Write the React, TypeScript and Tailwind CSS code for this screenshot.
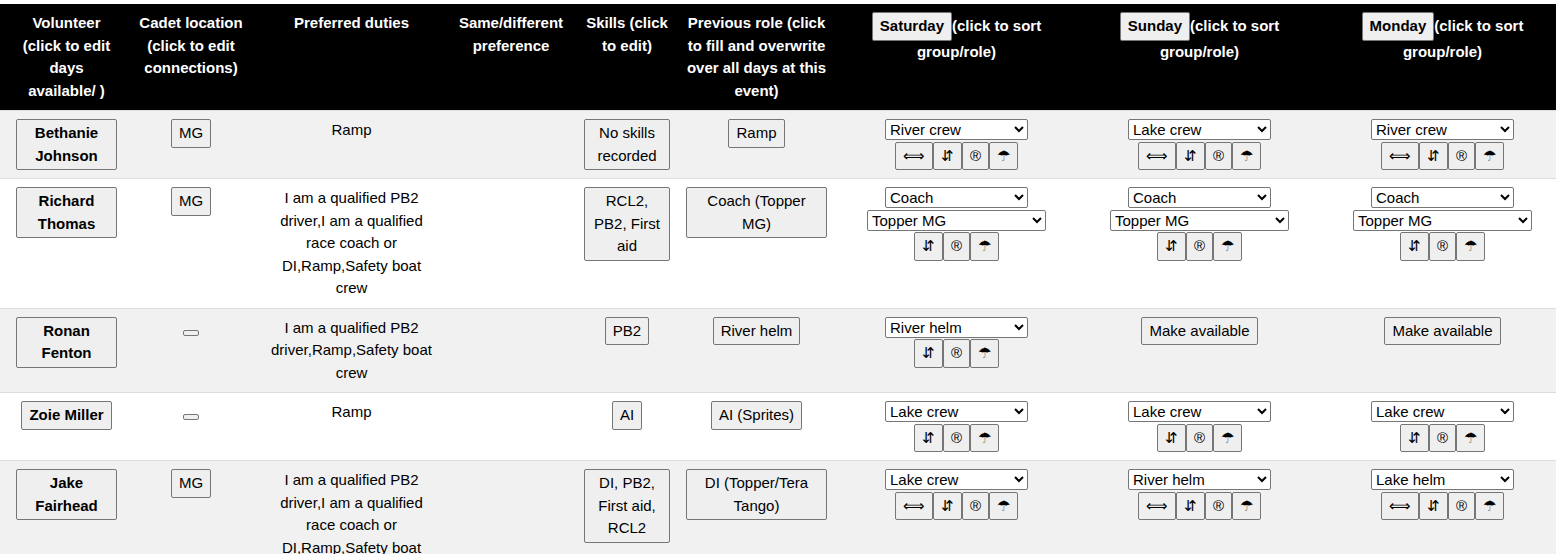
import type { ReactNode } from 'react';

type Day = {
  role?: string;
  group?: string;
  copyable?: boolean;
};

type Volunteer = {
  name: string;
  location: string;
  duties: string;
  preference: string;
  skills: string;
  previousRole: string;
  days: Day[];
};

const DAY_NAMES = ['Saturday', 'Sunday', 'Monday'];
const ROLES = ['River crew', 'River helm', 'Lake crew', 'Lake helm', 'Coach', 'DI', 'AI', 'Ramp'];
const GROUPS = ['Topper MG', 'Topper/Tera Tango', 'Sprites'];

const QUALIFIED = 'I am a qualified PB2 driver,I am a qualified race coach or DI,Ramp,Safety boat crew';

const VOLUNTEERS: Volunteer[] = [
  {
    name: 'Bethanie Johnson',
    location: 'MG',
    duties: 'Ramp',
    preference: '',
    skills: 'No skills recorded',
    previousRole: 'Ramp',
    days: [
      { role: 'River crew', copyable: true },
      { role: 'Lake crew', copyable: true },
      { role: 'River crew', copyable: true },
    ],
  },
  {
    name: 'Richard Thomas',
    location: 'MG',
    duties: QUALIFIED,
    preference: '',
    skills: 'RCL2, PB2, First aid',
    previousRole: 'Coach (Topper MG)',
    days: [
      { role: 'Coach', group: 'Topper MG' },
      { role: 'Coach', group: 'Topper MG' },
      { role: 'Coach', group: 'Topper MG' },
    ],
  },
  {
    name: 'Ronan Fenton',
    location: '',
    duties: 'I am a qualified PB2 driver,Ramp,Safety boat crew',
    preference: '',
    skills: 'PB2',
    previousRole: 'River helm',
    days: [{ role: 'River helm' }, {}, {}],
  },
  {
    name: 'Zoie Miller',
    location: '',
    duties: 'Ramp',
    preference: '',
    skills: 'AI',
    previousRole: 'AI (Sprites)',
    days: [{ role: 'Lake crew' }, { role: 'Lake crew' }, { role: 'Lake crew' }],
  },
  {
    name: 'Jake Fairhead',
    location: 'MG',
    duties: QUALIFIED,
    preference: '',
    skills: 'DI, PB2, First aid, RCL2',
    previousRole: 'DI (Topper/Tera Tango)',
    days: [
      { role: 'Lake crew', copyable: true },
      { role: 'River helm', copyable: true },
      { role: 'Lake helm', copyable: true },
    ],
  },
];

function Button({ children, label }: { children?: ReactNode; label?: string }) {
  return (
    <button
      type="button"
      aria-label={label}
      className="rounded-[2px] border border-[#767676] bg-[#efefef] px-[7px] py-[2px] text-black hover:bg-[#e5e5e5]"
    >
      {children}
    </button>
  );
}

const SELECT = 'h-[21px] rounded-[2px] border border-[#767676] bg-white py-0 text-black';

function DayCell({ day, label }: { day: Day; label: string }) {
  if (!day.role) {
    return <Button>Make available</Button>;
  }
  return (
    <>
      <select aria-label={`Role, ${label}`} defaultValue={day.role} className={`${SELECT} w-[143px]`}>
        {ROLES.map((role) => (
          <option key={role}>{role}</option>
        ))}
      </select>
      <br />
      {day.group && (
        <>
          <select aria-label={`Group, ${label}`} defaultValue={day.group} className={`${SELECT} w-[179px]`}>
            {GROUPS.map((group) => (
              <option key={group}>{group}</option>
            ))}
          </select>
          <br />
        </>
      )}
      {day.copyable && <Button label="Copy to all days">⟺</Button>}
      <Button label="Swap">⇵</Button>
      <Button label="Remove role">®</Button>
      <Button label="Make unavailable">☂</Button>
    </>
  );
}

export default function App() {
  return (
    <main className="overflow-x-auto bg-white pt-1 font-['Liberation_Sans',Arial,sans-serif] text-[15px] leading-normal text-black">
      <table className="w-full table-fixed border-collapse text-center [&_td]:p-2 [&_td]:align-top [&_td:first-child]:pl-4 [&_th]:p-2 [&_th]:align-top [&_th:first-child]:pl-4">
        <colgroup>
          <col className="w-[125px]" />
          <col className="w-[132px]" />
          <col className="w-[189px]" />
          <col className="w-[130px]" />
          <col className="w-[102px]" />
          <col className="w-[157px]" />
          <col className="w-[243px]" />
          <col className="w-[243px]" />
          <col className="w-[243px]" />
        </colgroup>
        <thead>
          <tr className="border-b border-[#dddddd] bg-black text-white">
            <th>Volunteer (click to edit days available/ )</th>
            <th>Cadet location (click to edit connections)</th>
            <th>Preferred duties</th>
            <th>Same/different preference</th>
            <th>Skills (click to edit)</th>
            <th>Previous role (click to fill and overwrite over all days at this event)</th>
            {DAY_NAMES.map((day) => (
              <th key={day}>
                <Button>{day}</Button>(click to sort group/role)
              </th>
            ))}
          </tr>
        </thead>
        <tbody>
          {VOLUNTEERS.map((v) => (
            <tr key={v.name} className="border-b border-[#dddddd] bg-white odd:bg-[#f1f1f1]">
              <td className="font-bold">
                <Button>{v.name}</Button>
              </td>
              <td>
                <Button label={v.location ? undefined : 'Edit connections'}>{v.location}</Button>
              </td>
              <td>{v.duties}</td>
              <td>{v.preference}</td>
              <td>
                <Button>{v.skills}</Button>
              </td>
              <td>
                <Button>{v.previousRole}</Button>
              </td>
              {v.days.map((day, i) => (
                <td key={DAY_NAMES[i]}>
                  <DayCell day={day} label={`${v.name}, ${DAY_NAMES[i]}`} />
                </td>
              ))}
            </tr>
          ))}
        </tbody>
      </table>
    </main>
  );
}
